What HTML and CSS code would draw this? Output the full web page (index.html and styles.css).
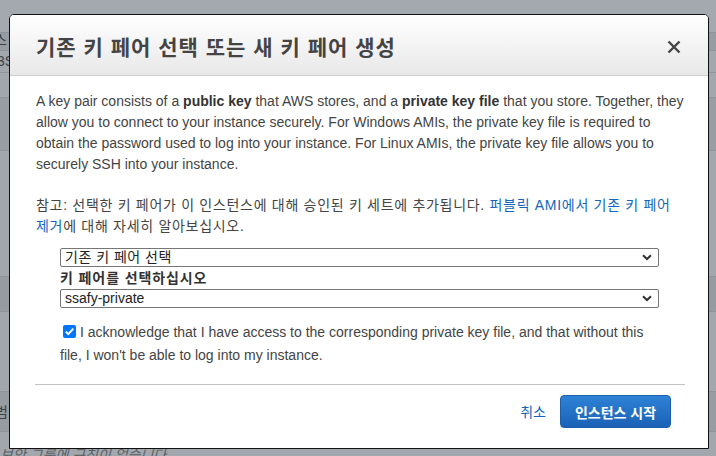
FILE: index.html
```html
<!DOCTYPE html>
<html lang="ko">
<head>
<meta charset="utf-8">
<link rel="stylesheet" href="styles.css">
</head>
<body>
<div class="page">
  <div class="band b1"></div>
  <div class="band b2"><span class="ghost">스</span></div>
  <div class="band b3"><span class="ghost">3S</span></div>
  <div class="band b4"></div>
  <div class="band b5"></div>
  <div class="band b6"></div>
  <div class="band b7"></div>
  <div class="band b8"></div>
  <div class="band b9"><span class="ghost">범</span></div>
  <div class="band b10"><span class="ghost foot">보안 그룹에 규칙이 없습니다.</span></div>
</div>

<div class="modal">
  <div class="modal-header">
    <h1 class="title">기존 키 페어 선택 또는 새 키 페어 생성</h1>
    <span class="close">
      <svg width="14" height="14" viewBox="0 0 14 14"><path d="M1.5 1.5 L12.5 12.5 M12.5 1.5 L1.5 12.5" stroke="#444" stroke-width="2.4" fill="none"/></svg>
    </span>
  </div>
  <div class="modal-body">
    <p class="para">A key pair consists of a <b>public key</b> that AWS stores, and a <b>private key file</b> that you store. Together, they allow you to connect to your instance securely. For Windows AMIs, the private key file is required to obtain the password used to log into your instance. For Linux AMIs, the private key file allows you to securely SSH into your instance.</p>
    <p class="para note">참고: 선택한 키 페어가 이 인스턴스에 대해 승인된 키 세트에 추가됩니다. <a class="link">퍼블릭 AMI에서 기존 키 페어 제거</a>에 대해 자세히 알아보십시오.</p>
    <div class="form">
      <div class="select"><span class="ko">기존 키 페어 선택</span><svg class="chev" width="10" height="7" viewBox="0 0 10 7"><path d="M1 1.2 L5 5 L9 1.2" stroke="#333" stroke-width="2" fill="none"/></svg></div>
      <div class="label">키 페어를 선택하십시오</div>
      <div class="select"><span>ssafy-private</span><svg class="chev" width="10" height="7" viewBox="0 0 10 7"><path d="M1 1.2 L5 5 L9 1.2" stroke="#333" stroke-width="2" fill="none"/></svg></div>
      <p class="ack"><span class="check"><svg width="13" height="13" viewBox="0 0 13 13"><rect x="0" y="0" width="13" height="13" rx="2" fill="#0075ff"/><path d="M2.8 6.6 L5.3 9.1 L10.3 3.6" stroke="#fff" stroke-width="2" fill="none"/></svg></span>I acknowledge that I have access to the corresponding private key file, and that without this file, I won't be able to log into my instance.</p>
    </div>
  </div>
  <div class="modal-footer">
    <a class="cancel">취소</a>
    <button class="primary">인스턴스 시작</button>
  </div>
</div>
</body>
</html>
```

FILE: styles.css
```css
html, body {
  margin: 0;
  padding: 0;
}
body {
  width: 716px;
  height: 456px;
  overflow: hidden;
  position: relative;
  background: #a2a7ad;
  font-family: "Liberation Sans", Arial, "Noto Sans CJK KR", sans-serif;
}
.page {
  display: flex;
  flex-direction: column;
  height: 456px;
  overflow: hidden;
}
.band {
  border-bottom: 1px solid #8e949a;
  box-sizing: border-box;
  position: relative;
  overflow: hidden;
  flex: none;
}
.ghost {
  color: #3e4247;
  font-size: 14px;
  line-height: 1;
  display: block;
  white-space: nowrap;
}
.b1 { height: 33px; background: #a4a9af; }
.b2 { height: 18px; background: #979ca2; }
.b2 .ghost { padding-top: 0; margin-left: -6px; }
.b3 { height: 22px; background: #a2a7ad; }
.b3 .ghost { padding-top: 3px; margin-left: -3px; }
.b4 { height: 25px; background: #a2a7ad; }
.b5 { height: 53px; background: #989da3; }
.b6 { height: 126px; background: #a2a7ad; }
.b7 { height: 35px; background: #969ba1; }
.b8 { height: 80px; background: #a2a7ad; }
.b9 { height: 40px; background: #979ca2; }
.b9 .ghost { padding-top: 13px; margin-left: -5px; }
.b10 { height: 24px; background: #a2a7ad; border-bottom: none; }
.b10 .ghost.foot { padding-top: 16px; margin-left: 0; font-style: italic; color: #5a5f64; }

.modal {
  position: absolute;
  left: 9px;
  top: 14px;
  width: 700px;
  height: 435px;
  box-sizing: border-box;
  background: #fff;
  border: 1px solid #111;
  border-radius: 5px 5px 0 0;
  display: flex;
  flex-direction: column;
  overflow: hidden;
}
.modal-header {
  height: 61px;
  box-sizing: border-box;
  border-bottom: 1px solid #cfcfcf;
  background: linear-gradient(#ffffff, #e8e8e8);
  display: flex;
  align-items: center;
  justify-content: space-between;
  padding: 0 27px 0 26px;
  flex: none;
}
.title {
  margin: 0;
  font-family: "Noto Sans CJK KR", sans-serif;
  font-size: 21px;
  font-weight: 700;
  color: #444;
  letter-spacing: 1px;
  padding-top: 1px;
}
.close {
  display: flex;
  padding-top: 4px;
}
.modal-body {
  padding: 15px 18px 0 26px;
  flex: 1;
  color: #444;
  font-size: 14px;
  line-height: 21px;
}
.para {
  margin: 0 0 20px 0;
}
.para b {
  font-weight: 700;
  color: #333;
}
.note {
  letter-spacing: 0.7px;
  word-break: keep-all;
  margin-bottom: 11px;
}
.link {
  color: #1166bb;
  text-decoration: none;
}
.form {
  padding: 0 31px 0 24px;
}
.select {
  height: 19px;
  box-sizing: border-box;
  border: 1px solid #767676;
  border-radius: 2px;
  display: flex;
  align-items: center;
  justify-content: space-between;
  padding: 0 6px 0 4px;
  color: #222;
  font-size: 14px;
  line-height: 17px;
}
.select .ko {
  letter-spacing: 0.5px;
}
.chev {
  flex: none;
}
.label {
  font-weight: 700;
  color: #333;
  line-height: 22px;
  letter-spacing: 0.9px;
}
.ack {
  margin: 13px 0 0 0;
  line-height: 22px;
  color: #444;
}
.check {
  display: inline-block;
  vertical-align: -1px;
  margin: 0 4px 0 3px;
}
.modal-footer {
  margin: 0 23px 0 25px;
  border-top: 1px solid #c3c3c3;
  height: 64px;
  box-sizing: border-box;
  display: flex;
  align-items: flex-start;
  justify-content: flex-end;
  padding-top: 10px;
  padding-right: 14px;
  flex: none;
}
.cancel {
  color: #1166bb;
  font-family: "Noto Sans CJK KR", sans-serif;
  font-size: 14px;
  line-height: 32px;
  margin-right: 14px;
}
.primary {
  height: 33px;
  width: 111px;
  border: 1px solid #1c5ea8;
  border-radius: 4px;
  background: linear-gradient(#2e82d6, #1a62b6);
  color: #fff;
  font-family: "Noto Sans CJK KR", sans-serif;
  font-weight: 700;
  font-size: 14px;
  padding: 0;
}
```
